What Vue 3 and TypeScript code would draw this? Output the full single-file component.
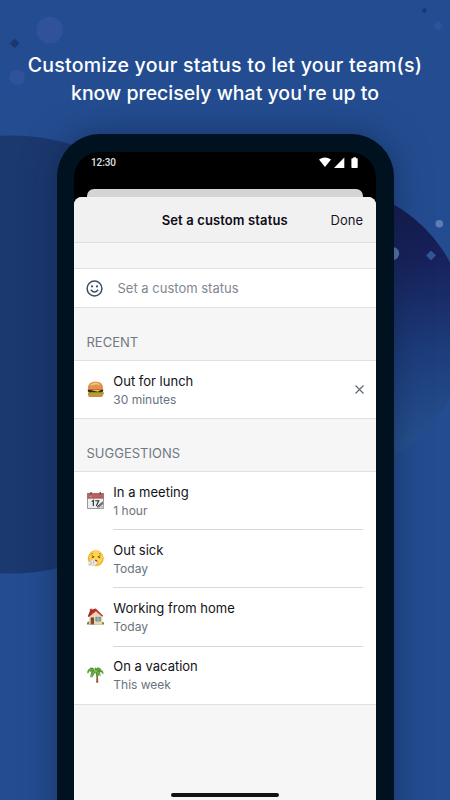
<script setup lang="ts">
type IconName = 'burger' | 'calendar' | 'sneeze' | 'house' | 'palm'

interface Status {
  icon: IconName
  text: string
  duration: string
}

interface Section {
  title: string
  clearable: boolean
  items: Status[]
}

const sections: Section[] = [
  {
    title: 'RECENT',
    clearable: true,
    items: [{ icon: 'burger', text: 'Out for lunch', duration: '30 minutes' }],
  },
  {
    title: 'SUGGESTIONS',
    clearable: false,
    items: [
      { icon: 'calendar', text: 'In a meeting', duration: '1 hour' },
      { icon: 'sneeze', text: 'Out sick', duration: 'Today' },
      { icon: 'house', text: 'Working from home', duration: 'Today' },
      { icon: 'palm', text: 'On a vacation', duration: 'This week' },
    ],
  },
]
</script>

<template>
  <main class="page">
    <svg class="backdrop" viewBox="0 0 450 800" aria-hidden="true">
      <defs>
        <linearGradient id="orb" x1="0" y1="0" x2="0" y2="1">
          <stop offset="0.08" stop-color="#151b4d" />
          <stop offset="0.25" stop-color="#17215a" />
          <stop offset="0.58" stop-color="#1d3d7c" />
          <stop offset="0.9" stop-color="#275290" />
        </linearGradient>
      </defs>
      <circle cx="10" cy="354.5" r="219" fill="#1b386f" />
      <circle cx="322" cy="330" r="144.7" fill="url(#orb)" />
      <circle cx="49.7" cy="30" r="13.3" fill="#30529a" />
      <circle cx="17.2" cy="77.3" r="7.7" fill="#30529a" />
      <path d="M14.6 38.4l4.9 4.9-4.9 4.9-4.9-4.9z" fill="#1b386f" />
      <path d="M424.4 7.8l2.8 2.8-2.8 2.8-2.8-2.8z" fill="#1b386f" />
      <path d="M438 20.6l4.9 4.9-4.9 4.9-4.9-4.9z" fill="#30529a" />
      <circle cx="439.3" cy="223.8" r="3.8" fill="#5e7db5" />
      <circle cx="392.5" cy="253.5" r="6.6" fill="#5e7db5" />
      <path d="M431 250.4l5 5-5 5-5-5z" fill="#315596" />
    </svg>

    <h1 class="headline">
      <span class="line one">Customize your status to let your team(s)</span>
      <span class="line two">know precisely what you're up to</span>
    </h1>

    <div class="phone">
      <div class="screen">
        <div class="statusbar">
          <span class="clock">12:30</span>
          <svg class="signals" viewBox="0 0 40 12" width="40" height="12" aria-hidden="true">
            <path d="M0 2.6Q6 -1.6 12 2.6L6 10z" fill="#fff" />
            <path d="M15 11L25.3 0.6V11z" fill="#fff" />
            <path d="M33.3 1.2h1V.2h2.7v1h1q.7 0 .7.7v8.4q0 .8-.8.8h-4.6q-.9 0-.9-.8V1.900q0-.7.9-.7z" fill="#fff" />
          </svg>
        </div>

        <div class="back-card"></div>

        <section class="sheet">
          <header class="header">
            <span class="title">Set a custom status</span>
            <button class="done" type="button">Done</button>
          </header>

          <div class="input-row">
            <svg class="smiley" viewBox="0 0 17 17" width="17" height="17" fill="none" stroke="#3f4e60" aria-hidden="true">
              <circle cx="8.5" cy="8.5" r="7.4" stroke-width="1.5" />
              <path d="M4.8 9.8q3.7 4.5 7.4 0" stroke-width="1.4" />
              <circle cx="6" cy="6.4" r="1.05" fill="#3f4e60" stroke="none" />
              <circle cx="11" cy="6.4" r="1.05" fill="#3f4e60" stroke="none" />
            </svg>
            <span class="placeholder">Set a custom status</span>
          </div>

          <template v-for="section in sections" :key="section.title">
            <h2 class="label">{{ section.title }}</h2>
            <ul class="list">
              <li v-for="item in section.items" :key="item.text" class="row">
                <svg class="emoji" viewBox="0 0 18 18" width="17" height="17" aria-hidden="true">
                  <g v-if="item.icon === 'burger'">
                    <path d="M1 12.5h16v1.8q0 2.7-3 2.7H4q-3 0-3-2.7z" fill="#d58a43" />
                    <path d="M.8 11.3q1.5-1 3 0t3 0 3 0 3 0 3 0 1.4.6 1.4 1.3q-1 1.2-2.2.6t-2.4.4-2.6-.1-2.4.2-2.6-.3-2.8.4z" fill="#86b82e" />
                    <path d="M.9 9h16.2q.5 2.8-1.8 2.8H2.7Q.4 11.8.9 9z" fill="#4a2119" />
                    <path d="M3 9.2h12.4l-4.1 2.3z" fill="#f6bf2c" />
                    <path d="M1 8h16v1.4H1z" fill="#d64b32" />
                    <path d="M1.1 8.2Q.6.6 9 .6t7.900 7.600q0 .6-.7.6H1.800q-.7 0-.7-.6z" fill="#dc954e" />
                    <path d="M3 5Q4.700 1.900 9 1.700q3.500 0 5 2.300-4-.7-11 1z" fill="#f0bd7c" />
                    <path d="M5.700 3.800h1M9 3h1M11.700 4.300h1" stroke="#fae2b2" stroke-width=".6" />
                  </g>
                  <g v-else-if="item.icon === 'calendar'">
                    <path d="M.5 1.500h17v16H.5z" fill="#eceded" stroke="#777" stroke-width=".8" />
                    <path d="M.3 1.200h17.400v5.600H.3z" fill="#b4645f" />
                    <path d="M.3 6.500h17.400" stroke="#88504d" stroke-width=".6" />
                    <path d="M4.300 0v2.600M14 0v2.600" stroke="#4c4140" stroke-width="1.200" />
                    <path d="M2.500 4.500h2.800" stroke="#d3aaa6" stroke-width=".8" />
                    <path d="M5 10.200L6.700 8.900v6M8.700 9.300h3.700l-2.500 5.600" fill="none" stroke="#2d2d2d" stroke-width="1.200" />
                    <path d="M10.500 15.500l6.400-5.500v2.900l-4 3.600h-2.400z" fill="#77797a" />
                    <path d="M10.700 15.600l5.800-5" stroke="#343637" stroke-width=".7" />
                    <path d="M12.700 17.100L17.200 13v4.100z" fill="#c9caca" />
                  </g>
                  <g v-else-if="item.icon === 'sneeze'">
                    <circle cx="9.300" cy="8.800" r="8.500" fill="#f5b52f" />
                    <circle cx="9.600" cy="7.800" r="7" fill="#ffd452" />
                    <path d="M4.400 4.400l2.100-.8M12.600 3.600l2.100.9" stroke="#9c6725" stroke-width=".8" />
                    <path d="M4.900 6l2.700 1.200L4.900 8.400M14.200 6l-2.700 1.200 2.700 1.200" fill="none" stroke="#634012" stroke-width=".9" />
                    <path d="M6.800 11.600q2.400-2.700 4.600 0l-.5 1.800H7.500z" fill="#875129" />
                    <path d="M7.200 9.600L4 12.200.5 12.700l1 2-1.200 2 3.100.5 2.700-1 2.500.6 1.300-2.200 1.900-2.500-2.300.2z" fill="#e5e7e8" />
                    <path d="M3.800 12.700l1.500 2M7.200 11l-.5 3.100M2 15.500l3-.8" stroke="#a9acae" stroke-width=".7" />
                  </g>
                  <g v-else-if="item.icon === 'house'">
                    <path d="M0 15.500q2-2.200 4 0h10q2-2 4 0v2H0z" fill="#6c8a3d" />
                    <path d="M3 3.200V.8h2.800v3z" fill="#b24a38" />
                    <path d="M2.300 7.700L9.400 2l6.600 6v9.500H2.300z" fill="#ead5ae" />
                    <path d="M.8 9L3.200 3.300 9.300.6l7.700 7.700-.8 1L9.500 3.500 2 9.500z" fill="#b92e29" />
                    <path d="M2 8L3.500 3.700 8.500 1" fill="none" stroke="#7e2522" stroke-width=".8" />
                    <path d="M3.900 10h3.500v7.500H3.900z" fill="#7d4b31" />
                    <path d="M4.700 10.900h1.900v1.800H4.700z" fill="#3c4c5a" />
                    <path d="M9.300 9.900h5v3.900h-5z" fill="#63a8d8" stroke="#8d6f52" stroke-width=".6" />
                    <path d="M11.800 10v3.700" stroke="#dbe9ee" stroke-width=".5" />
                    <path d="M3 17.300h5" stroke="#a5a29d" stroke-width=".9" />
                  </g>
                  <g v-else>
                    <path d="M9 5.500q1.800 5.500.7 12.200h2.200Q12.200 10 10 5.500z" fill="#94683c" />
                    <path d="M10.500 9v8.500" stroke="#5d3e25" stroke-width=".7" stroke-dasharray="1 .7" />
                    <path d="M9 5.600Q7.500 1.300 3.500 1.500L2.800 3Q0 3.800.1 8.500l1-2 .5 1.500 1.200-3 1.200 1.500L5 5.400l-2 6.900 1.600-1.400.4 1.700L8.800 7l1.600 3.500.9-1.500 1.300 2.200.3-1.800 1.600 2-.8-5 1.900.6.6 2 .6-1.500.9 1.500q0-3.900-2.400-5.100L13.800 2Q10.500.7 9.800 2.700L8.600 1.200 8 2.600z" fill="#529c35" />
                    <path d="M9 5.500Q6 2 2.500 5M9 5.500q-3.500 1-4.500 5M9 5.500q3.500-3 7-.5M9 5.500q3.500.5 4 4" fill="none" stroke="#9bca5c" stroke-width=".7" />
                    <path d="M4 2.700l3 .6M11 4.500l3 .3M4 8l1.500-.5" stroke="#2c6d28" stroke-width=".6" />
                  </g>
                </svg>
                <div class="body">
                  <div class="copy">
                    <span class="name">{{ item.text }}</span>
                    <span class="duration">{{ item.duration }}</span>
                  </div>
                  <svg v-if="section.clearable" class="clear" viewBox="0 0 9 9" width="9" height="9" aria-hidden="true">
                    <path d="M.5.5l8 8M8.500.5l-8 8" stroke="#5c6773" stroke-width="1.100" />
                  </svg>
                </div>
              </li>
            </ul>
          </template>
        </section>
        <div class="home-bar"></div>
      </div>
    </div>
  </main>
</template>

<style>
body {
  margin: 0;
  overflow: hidden;
}
</style>

<style scoped>
.page {
  position: relative;
  display: flex;
  flex-direction: column;
  align-items: center;
  box-sizing: border-box;
  width: 450px;
  height: 800px;
  padding-top: 51px;
  overflow: hidden;
  background: #244d91;
  font-family: Inter, "Liberation Sans", sans-serif;
}
.backdrop {
  position: absolute;
  inset: 0;
  width: 450px;
  height: 800px;
}
.headline {
  position: relative;
  display: flex;
  flex-direction: column;
  align-items: center;
  flex: none;
  height: 83px;
  margin: 0;
  color: #fff;
  font-size: 19.5px;
  font-weight: 500;
  line-height: 28px;
  white-space: nowrap;
}
.one {
  letter-spacing: 0.26px;
}
.phone {
  position: relative;
  box-sizing: border-box;
  flex: none;
  width: 337px;
  height: 720px;
  padding: 18px 17.5px 0 17px;
  border-radius: 43px 43px 0 0;
  background: #00111f;
  box-shadow: 0 0 34px rgba(14, 32, 66, 0.55);
}
.screen {
  position: relative;
  display: flex;
  flex-direction: column;
  height: 648px;
  overflow: hidden;
  border-radius: 26px 26px 0 0;
  background: #000;
}
.statusbar {
  display: flex;
  justify-content: space-between;
  box-sizing: border-box;
  height: 37px;
  padding: 5px 17px 0 17.5px;
}
.clock {
  color: #e0e0e0;
  font: 500 10px/12px Roboto, sans-serif;
  letter-spacing: -0.1px;
}
.back-card {
  flex: none;
  height: 8px;
  margin: 0 13px;
  border-radius: 7px 7px 0 0;
  background: #d4d4d4;
}
.sheet {
  flex: 1;
  border-radius: 8px 8px 0 0;
  background: #f6f6f6;
  overflow: hidden;
}
.header {
  display: grid;
  grid-template-columns: 1fr auto 1fr;
  align-items: center;
  box-sizing: border-box;
  height: 46px;
  padding: 0 13px;
  border-bottom: 1px solid #dfdfdf;
  background: #f1f1f1;
}
.title {
  grid-column: 2;
  color: #0b0c16;
  font-size: 13px;
  font-weight: 600;
  letter-spacing: 0.12px;
}
.done {
  justify-self: end;
  padding: 0;
  border: 0;
  background: none;
  color: #16171f;
  font: 400 13px Inter, sans-serif;
}
.input-row {
  display: flex;
  align-items: center;
  gap: 14.5px;
  box-sizing: border-box;
  height: 40px;
  margin-top: 25px;
  padding-left: 12.5px;
  border: 1px solid #e0e0e0;
  border-width: 1px 0;
  background: #fff;
}
.placeholder {
  color: #7f8790;
  font-size: 13px;
}
.label {
  box-sizing: border-box;
  height: 52px;
  margin: 0;
  padding: 24px 0 0 13px;
  color: #707983;
  font-size: 13px;
  font-weight: 400;
  line-height: 20px;
}
.list {
  margin: 0;
  padding: 0;
  border: 1px solid #e0e0e0;
  border-width: 1px 0;
  background: #fff;
  list-style: none;
}
.row {
  display: flex;
  align-items: center;
  height: 57px;
  padding: 0 13px;
}
.emoji {
  flex: none;
  margin-right: 9px;
}
.body {
  display: flex;
  flex: 1;
  align-items: center;
  justify-content: space-between;
  box-sizing: border-box;
  height: 100%;
}
.row + .row {
  height: 58.3px;
}
.row + .row .body {
  border-top: 1px solid #d8d8d8;
}
.copy {
  display: flex;
  flex-direction: column;
  padding-left: 0.8px;
}
.name {
  color: #111218;
  font-size: 13px;
  line-height: 20px;
}
.duration {
  color: #69737e;
  font-size: 12px;
  line-height: 18px;
}
.clear {
  margin-right: -1px;
}
.home-bar {
  position: absolute;
  bottom: 3.5px;
  left: 97px;
  width: 108px;
  height: 4px;
  border-radius: 2px;
  background: #101112;
}
</style>
